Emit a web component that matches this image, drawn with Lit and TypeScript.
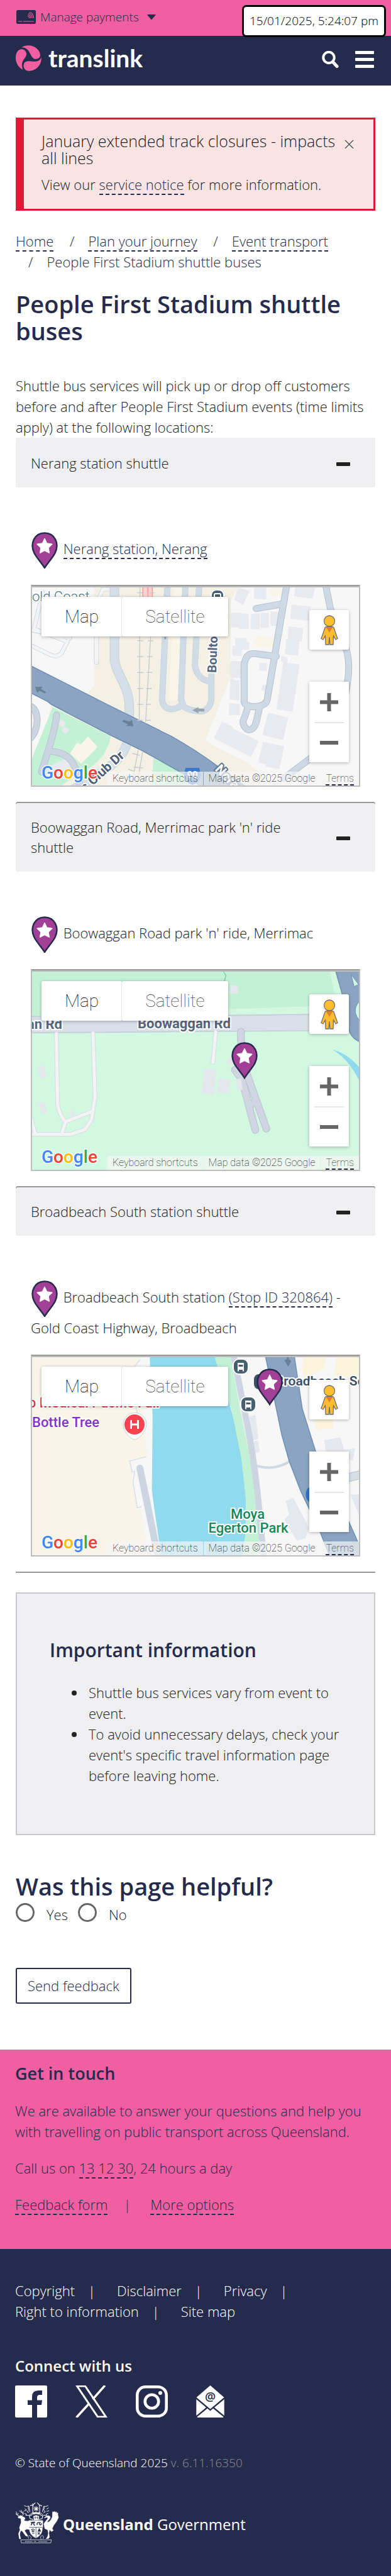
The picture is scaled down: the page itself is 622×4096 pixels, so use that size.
import { LitElement, html, svg, css, TemplateResult } from "lit";
import { customElement, property } from "lit/decorators.js";

/* ---------- shared drawings ---------- */

const pinShape = svg`
  <path d="M22 57C18 50 10 42 5.500 33.500C-2 18 6 1.500 22 1.500S46 18 38.500 33.500C34 42 26 50 22 57Z" fill="#a23f96" stroke="#252b4c" stroke-width="2.500"/>
  <path d="M22 10.500L25.600 18L33.800 19.200L27.900 25L29.300 33.200L22 29.400L14.700 33.200L16.100 25L10.200 19.200L18.400 18Z" fill="#fff" stroke="#fff" stroke-width="1.500" stroke-linejoin="round"/>`;

const road = (d: string, width: number, fill = "#cdd9e5", edge = "#b7c2d0") => svg`
  <path d=${d} fill="none" stroke=${edge} stroke-width=${width + 2} stroke-linecap="round" stroke-linejoin="round" vector-effect="non-scaling-stroke"/>
  <path d=${d} fill="none" stroke=${fill} stroke-width=${width} stroke-linecap="round" stroke-linejoin="round" vector-effect="non-scaling-stroke"/>`;

const busStop = (x: number, y: number) => svg`
  <g transform="translate(${x} ${y})">
    <rect x="-12" y="-12" width="24" height="24" rx="9" fill="#47606f" stroke="#fff" stroke-width="2"/>
    <path d="M-5 -6H5V5H-5Z" fill="#fff"/>
    <path d="M-3.500 -3H3.500V0H-3.500Z" fill="#47606f"/>
    <path d="M-4 5V7.500M4 5V7.500" stroke="#fff" stroke-width="2"/>
  </g>`;

const sleepers = [65, 430, 551, 673, 795, 916, 1037];

const nerangMap = svg`
  <rect width="522" height="317" fill="#f7f7f7"/>
  <g transform="matrix(.3365 0 0 .2085 -3.500 -5)">
    <path d="M303 25H985L950 130V700L832 1185L870 1230L1020 1350L1110 1470L1060 1543H20L100 920L275 825L303 770Z" fill="#f4f0e4"/>
    <path d="M680 25H722L702 870Q700 885 680 882H658Z" fill="#f9f5e8"/>
    <path d="M1135 25H1190V100L1135 95ZM1067 392L1160 408L1150 485L1062 472Z" fill="#f9f5e8"/>
    <path d="M108 938L383 1160C370 1270 330 1370 250 1430L140 1543H9V1330Z" fill="#c3f1d5"/>
    <path d="M585 1320L720 1440L760 1543H575Z" fill="#c3f1d5"/>
    <path d="M275 1162L321 1240L242 1370L190 1290L225 1205L240 1222Z" fill="#f9f5e8"/>
    <g fill="#e8eaf0">
      <path d="M985 25L1040 50L1008 157L965 118ZM1060 25H1118V115L1060 110ZM1255 25H1348L1338 110L1249 92ZM1237 155L1330 170L1322 280L1231 262Z"/>
      <path d="M950 217H1000V223H1035V340H988V330H948ZM1045 226L1087 222V343H1043ZM1092 216L1130 220V332H1090ZM1138 206L1182 212V322L1138 315Z"/>
      <path d="M970 410H1025V440H1038V500H1002V550L957 543V470H970ZM1222 320L1292 335L1285 437H1274L1268 545L1206 535L1212 420H1220ZM1085 600H1120V662L1084 656Z"/>
      <path d="M948 585H1000V713H948ZM947 720H965V732H992V885L944 880ZM942 907L993 915V998H941ZM1190 545L1218 560V600L1275 612L1242 973L1166 953L1198 590L1186 585Z"/>
      <path d="M908 1046L958 1085V1100L1082 1195L1045 1317L870 1175ZM1126 980L1221 1015L1197 1188L1100 1150ZM1101 1201L1202 1235L1180 1412L1116 1390V1370L1080 1358ZM1100 768H1116V815L1092 808Z"/>
      <path d="M150 1030L170 1055L155 1092L131 1060ZM165 1083L186 1108L170 1145L150 1115ZM80 1400L165 1330L220 1400V1480H80Z"/>
    </g>
    ${road("M60 60L20 340L165 430M9 350L190 410M9 470L100 540Q130 560 150 525L180 430M320 130L345 38H380", 5, "#f3f4f6", "#d3d8df")}
    ${road("M315 380V595", 6, "#f3f4f6", "#d3d8df")}
    ${road("M400 20V560C400 680 470 760 470 940V1080C470 1300 410 1380 210 1560", 13, "#d5dfe7", "#c5d0da")}
    ${road("M650 20L625 880C630 980 700 960 720 915C735 960 780 965 810 970C850 960 858 900 858 860V690M735 20L715 880L725 920M800 20L780 620C790 700 815 735 855 740", 8, "#cfdbe5", "#c8d5e1")}
    ${road("M1213 20L1122 880C1115 950 1010 950 1013 890V620C1020 520 1050 520 1090 535L1165 550M1195 150L1070 185M1030 930C1025 1000 1000 1040 1010 1070C1030 1140 1060 1110 1070 1050L1087 930", 9)}
    ${road("M1400 20L1420 180L1480 430C1520 560 1510 700 1490 850L1400 1240L1200 1480", 9)}
    ${road("M126 998C120 1120 80 1300 55 1430M100 1275C170 1280 205 1340 220 1430L240 1543M0 930C45 950 45 1100 5 1170", 9, "#cbd5e2")}
    <path d="M9 625L370 920L670 1160Q790 1270 890 1390L1020 1543H810L720 1440L610 1340L520 1260L380 1150L200 1000L100 915L85 895L9 833Z" fill="#8aa4c1" stroke="#6f8fb5" stroke-width="1.500" vector-effect="non-scaling-stroke"/>
    <path d="M533 20H580V110H533Z" fill="#ffd0d0"/>
    <path d="M534 20V110M558 20V110M579 20V110" stroke="#f79a9a" stroke-width="1.500" vector-effect="non-scaling-stroke"/>
    <path d="M521 20L517 1040M571 400L547 1050M512 1265L480 1543M533 1280L505 1543" stroke="#c6c9ce" stroke-width="1.300" vector-effect="non-scaling-stroke"/>
    ${sleepers.map((y) => svg`<path d="M508 ${y}H535M${566 - y / 50} ${y}h26" stroke="#c6c9ce" stroke-width="1.500" vector-effect="non-scaling-stroke"/>`)}
    <path d="M485 1290L520 1305M490 1395L535 1402M465 1410L490 1425" stroke="#c6c9ce" stroke-width="1.500" vector-effect="non-scaling-stroke"/>
    <path d="M25 783L60 782L53 800L76 820L73 835L45 812L35 828ZM489 1082L482 1032L473 1048L442 1034L438 1048L465 1068L455 1080Z" fill="#687f97"/>
    <path d="M768 960L797 936V950H825V970H797V985ZM636 400H644V420H636Z" fill="#9aa3ab"/>
  </g>
  <g class="label">
    <text x="0" y="22" font-size="22" fill="#4c7180">old Coast</text>
    <text transform="translate(293 136) rotate(-88)" font-size="20" font-weight="700" fill="#54657d">Boulton</text>
    <text transform="translate(148 269) rotate(-42)" text-anchor="end" font-size="21" font-weight="700" fill="#4c5d75">es Club Dr</text>
    <text transform="translate(290 290) rotate(46)" font-size="21" font-weight="700" fill="#fff" style="stroke:#5c7390">Nerang</text>
  </g>
  <rect x="285" y="4" width="20" height="34" rx="8" fill="#47606f" stroke="#fff" stroke-width="2"/>
  <rect x="290" y="10" width="10" height="12" rx="1.500" fill="none" stroke="#fff" stroke-width="2"/>
  <path d="M290 16H300" stroke="#fff" stroke-width="2"/>
  <path d="M244 287H266L268 298C267 308 261 312 255 314C249 312 243 308 242 298Z" fill="#3b78cc"/>
  <text x="255" y="303" text-anchor="middle" font-size="15" font-weight="700" fill="#fff">90</text>`;

const boowagganMap = svg`
  <rect width="522" height="317" fill="#d3f8e2"/>
  <g transform="matrix(.3967 0 0 .4036 -51 -279)">
    <path d="M128 685H1320L1350 810L1240 828L900 840L600 850L128 866Z" fill="#c3f1d5"/>
    <path d="M895 690L906 705L900 730" fill="none" stroke="#7fd0ad" stroke-width="1.500" vector-effect="non-scaling-stroke"/>
    <path d="M1332 998C1380 1010 1420 1040 1445 1075V1130C1420 1080 1390 1030 1332 998Z" fill="#8fdaee"/>
    <path d="M120 868L700 866L1445 857V922L700 928L120 932Z" fill="#d8dfe7" stroke="#c2cbd7" stroke-width="1.500" vector-effect="non-scaling-stroke"/>
    <path d="M1345 685H1445V968C1420 960 1400 940 1395 900L1375 790Z" fill="#8aa4c1" stroke="#6f8fb5" stroke-width="1.500" vector-effect="non-scaling-stroke"/>
    <path d="M1408 702L1438 742L1420 750ZM1445 805C1418 830 1418 860 1445 885Z" fill="#d3f8e2" stroke="#6f8fb5" stroke-width="1" vector-effect="non-scaling-stroke"/>
    ${road("M865 930L854 1048M226 936L231 1215Q240 1260 263 1282L248 1330M373 934L381 1185L367 1275L340 1313L283 1332H120M263 1282L367 1243M125 1270L140 1325", 5, "#f3f4f6", "#d9dce4")}
    ${road("M966 928V960L985 1080L1068 1310M942 1078L970 1115L1024 1315M1008 1214L1030 1203", 10, "#cfd5e1", "#b9c1d0")}
    <path d="M922 745H955V778L922 776ZM820 1070L868 1076L858 1175L808 1170ZM877 1110L925 1116L917 1172L870 1166ZM945 1115L966 1112L973 1155L955 1160ZM150 1067L175 1060L187 1105L163 1113ZM157 1210L178 1205L190 1247L167 1254ZM276 1244L290 1237L302 1255L285 1265ZM912 1030H935V1058H912Z" fill="#e4e8ec"/>
  </g>
  <g class="label" font-size="22" font-weight="700" fill="#54657d">
    <text x="48" y="91" text-anchor="end">Boowaggan Rd</text>
    <text x="168" y="90">Boowaggan Rd</text>
  </g>
  <g transform="translate(316 112)">${pinShape}</g>`;

const broadbeachMap = svg`
  <rect width="522" height="317" fill="#f7f7f7"/>
  <g transform="matrix(.3967 0 0 .4204 -51 -284)">
    <path d="M120 670H562L545 720L570 860L590 1055L520 1062L548 1245L565 1258L598 1435H120Z" fill="#f9f4e8"/>
    <path d="M562 685L540 710M545 868L575 960M586 1052L520 1068L530 1110L540 1108L534 1150L550 1245L567 1242" fill="none" stroke="#d8dee8" stroke-width="1.500" vector-effect="non-scaling-stroke"/>
    <path d="M600 670H862L935 900L972 1070L986 1210V1330L975 1435H648L622 1270L609 1180L612 900Z" fill="#90daee"/>
    <path d="M859 670H924L965 880L1008 1080L1035 1280L1040 1435H970L986 1330V1210L968 1060L930 880Z" fill="#c3f1d5"/>
    <path d="M1220 670H1310L1300 720L1225 755L1210 720ZM1350 670H1440V760L1340 745Z" fill="#fbf3dc"/>
    <path d="M1250 880H1335V945L1270 950Z" fill="#fbf3dc"/>
    <path d="M1000 900L1025 895L1036 985L1010 990ZM1015 995L1035 990L1042 1035L1022 1038ZM1300 990L1365 978L1380 1025L1424 1020L1415 1065L1310 1060ZM1145 1220L1175 1207L1240 1320L1225 1360L1190 1370L1140 1290L1160 1270ZM1405 1195H1445V1285Z" fill="#e6e8ef"/>
    ${road("M561 1095L635 1435", 9, "#cdd5e3", "#cdd5e3")}
    ${road("M935 660L985 900Q1020 1060 1038 1240L1058 1440", 8, "#cdd5e3", "#cdd5e3")}
    ${road("M1035 1088Q1100 1105 1162 1070", 2, "#cdd9e5", "#cdd9e5")}
    ${road("M1380 1135L1445 1120", 12, "#d5dfe7", "#b7c2d0")}
    <path d="M1064 670H1180L1212 870L1265 1030L1400 1300L1445 1395V1435H1325L1285 1340L1205 1180L1160 1070L1130 970Z" fill="#8aa4c1" stroke="#6f8fb5" stroke-width="1.500" vector-effect="non-scaling-stroke"/>
    <path d="M1140 687L1150 684V676H1158V684L1168 690L1156 711Z" fill="#687f97"/>
    <ellipse cx="1248" cy="1195" rx="22" ry="30" fill="#2f72cc"/>
  </g>
  <g class="label" font-weight="500">
    <text x="205" y="80" text-anchor="end" font-size="22" fill="#e0344c">p Medical Pacific Fair</text>
    <text x="0" y="111" font-size="22" fill="#8430ce">Bottle Tree</text>
    <text x="387" y="45" font-size="21" font-weight="600" fill="#3c4f66">Broadbeach South</text>
    <g font-size="22" text-anchor="middle" fill="#14875c"><text x="343" y="257">Moya</text><text x="344" y="279">Egerton Park</text></g>
  </g>
  <path d="M163 131C157 131 145 118 145 107A18.500 18.500 0 0 1 182 107C182 118 169 131 163 131Z" fill="#fff" stroke="#c9ccd3" stroke-width="1"/>
  <circle cx="163" cy="107" r="16" fill="#f9414f"/>
  <path d="M157.500 100V114M168.500 100V114M157.500 107H168.500" stroke="#fff" stroke-width="3"/>
  ${busStop(332, 15)}${busStop(344, 75)}
  <rect x="353" y="27" width="20" height="24" rx="8" fill="#3c4f66"/>
  <g transform="translate(356 18)">${pinShape}</g>`;

const crest = html`
  <svg class="crest" viewBox="24 44 398 368" aria-hidden="true">
    <g fill="#fff" stroke="#fff" stroke-linejoin="round">
      <path d="M50 172L75 160L98 172L112 180L116 196L104 198L112 210L140 212L150 208V262L158 290L130 285L110 298L138 340L136 352L118 345L90 305L78 298L68 322V340L76 372L62 374L54 325L68 290L62 272L78 225L76 190L52 184Z"/>
      <path d="M62 166L44 158L28 144M42 156L34 126M44 158L52 140M86 166L100 152L84 130L78 112M92 142L62 118M98 148L96 124" fill="none" stroke-width="5"/>
      <path d="M287 184C300 160 330 155 342 172C350 195 312 205 318 222C345 215 350 190 360 175L362 125L374 130L382 122L388 134L398 126L402 140L412 136L412 158L418 180L400 215L375 250L360 280L372 298L352 308L338 290L330 320L336 358L326 372H302L316 356L324 322L318 292L292 280L284 240C290 215 325 195 318 180C310 176 300 184 287 184Z" stroke-width="1"/>
      <path d="M150 207H275V268H270C275 320 245 350 213 364C178 350 148 320 156 268H150Z" stroke-width="3"/>
      <path d="M190 130L176 155L152 165L160 190L190 198M240 130L252 155L275 165L268 190L240 198M190 148C180 130 180 80 190 62L208 46M240 148C250 130 250 80 240 62L224 46M160 72L185 68M245 66L268 76M178 56L190 62" fill="none" stroke-width="6"/>
      <path d="M106 72L128 80L150 76L142 92L148 110L132 128L150 134M112 100L128 112L106 120M108 142L128 150L120 160L150 160L186 132M324 72L302 80L282 78L290 92L282 110L298 128L280 134M328 92L308 104M332 118L308 124M324 142L304 150L310 160L282 160L246 132M150 80L158 130M284 80L270 130" fill="none" stroke-width="5"/>
      <path d="M190 168L214 160L240 168L236 202H196Z" stroke-width="2"/>
      <path d="M186 138Q213 126 242 138L240 152Q213 142 190 152Z"/>
      <path d="M196 84L232 116M232 84L196 116M214 78V124M190 100H238" fill="none" stroke-width="6"/>
      <path d="M76 382H352L347 409H80ZM150 342Q178 350 165 378M150 342Q136 350 148 372M268 342Q246 350 260 378M268 342Q290 350 276 374" fill="none" stroke-width="4"/>
    </g>
    <g fill="none" stroke="#252b4c">
      <path d="M213 268V364M156 268H270M207 170V195M199 180H215M226 170V195M218 180H234" stroke-width="4"/>
      <path d="M168 250Q185 215 200 222Q182 240 204 252M166 228L184 222M224 248Q215 218 255 226Q235 232 250 246Q260 250 264 232" stroke-width="8"/>
      <path d="M172 284L180 300M186 278V302M201 284L194 300M174 308H200M178 322H198M228 314L248 334M248 314L228 334" stroke-width="6"/>
      <path d="M228 306L243 276L258 306Z" fill="#252b4c" stroke-width="2"/>
      <path d="M114 396H180M197 396H216M236 396H316" stroke="#fff" stroke-width="7" stroke-dasharray="5 5"/>
    </g>
  </svg>`;

/* ---------- embedded map ---------- */

@customElement("stop-map")
class StopMap extends LitElement {
  @property({ attribute: false }) drawing: TemplateResult | null = null;

  static styles = css`
    :host { display: block; font-family: Roboto, sans-serif; }
    .frame { position: relative; box-sizing: border-box; height: 321px; border: 2px solid #bdbdbd; border-top: 2px solid #999; overflow: hidden; }
    .drawing { display: block; box-sizing: border-box; width: 100%; height: 100%; border-top: 2px solid #bdbdbd; }
    .label text { paint-order: stroke; stroke: #fff; stroke-width: 4px; stroke-linejoin: round; }
    button { margin: 0; padding: 0; border: 0; background: #fff; font: inherit; cursor: pointer; }
    .types { position: absolute; left: 15px; top: 17px; display: flex; border-radius: 3px; box-shadow: 0 1px 5px rgba(0, 0, 0, .28); }
    .types button { height: 63px; padding: 0 37px; font-size: 28px; font-weight: 100; color: #000; border-radius: 3px; }
    .types button + button { color: #444; box-shadow: -1px 0 2px rgba(0, 0, 0, .12); }
    .person, .zoom { position: absolute; right: 16px; width: 63px; box-shadow: 0 1px 5px rgba(0, 0, 0, .28); }
    .person { top: 38px; height: 63px; border-radius: 3px; display: grid; place-items: center; }
    .zoom { top: 152px; background: #fff; }
    .zoom button { display: grid; place-items: center; width: 63px; height: 64px; }
    .zoom button + button { position: relative; }
    .zoom button + button::before { content: ""; position: absolute; top: 0; left: 8px; right: 8px; height: 2px; background: #e6e6e6; }
    .google { position: absolute; left: 15px; bottom: 4px; font-size: 28px; font-weight: 500; line-height: 33px; paint-order: stroke; -webkit-text-stroke: 3px rgba(255, 255, 255, .8); text-decoration: none; }
    .blue { color: #4285f4; } .red { color: #ea4335; } .gold { color: #fbbc05; } .green { color: #34a853; }
    .credits { position: absolute; right: 0; bottom: 0; display: flex; gap: 1px; font-size: 16px; font-weight: 100; line-height: 22px; color: #000; }
    .credits > * { padding: 0 8px; background: rgba(245, 245, 245, .7); }
    .credits button { font-size: 16px; font-weight: 100; color: #000; }
    .credits a { color: #222; text-decoration: none; height: 20px; border-bottom: 2px dashed #252b4c; display: block; }
  `;

  render() {
    return html`
      <div class="frame">
        <svg class="drawing" viewBox="0 0 520 315" preserveAspectRatio="xMidYMid slice" role="img" aria-label="Map">${this.drawing}</svg>
        <a class="google" href="#"><span class="blue">G</span><span class="red">o</span><span class="gold">o</span><span class="blue">g</span><span class="green">l</span><span class="red">e</span></a>
        <div class="types"><button>Map</button><button>Satellite</button></div>
        <button class="person" aria-label="Street View">
          <svg width="28" height="48" viewBox="0 0 28 48">
            <g fill="#fdbd2f" stroke="#707070" stroke-width="1.300">
              <path d="M6.500 21.500Q7 18.500 10 18.500H18Q21 18.500 21.500 21.500L27 37.500L24 39L20.500 33L20 47H15L14 35L13 47H8L7.500 33L4 39L1 37.500Z"/>
              <circle cx="14" cy="9.500" r="8.500"/>
            </g>
            <path d="M8.500 19H19.500L14 28Z" fill="#e0812c"/>
          </svg>
        </button>
        <div class="zoom">
          <button aria-label="Zoom in"><svg width="29" height="29"><path d="M0 14.500H29M14.500 0V29" stroke="#666" stroke-width="6"/></svg></button>
          <button aria-label="Zoom out"><svg width="29" height="29"><path d="M0 15H29" stroke="#666" stroke-width="6"/></svg></button>
        </div>
        <div class="credits"><button>Keyboard shortcuts</button><span>Map data ©2025 Google</span><span><a href="#">Terms</a></span></div>
      </div>`;
  }
}

/* ---------- page ---------- */

@customElement("app-root")
class AppRoot extends LitElement {
  static styles = css`
    :host { display: block; position: relative; font: 300 22px/33px "Open Sans", sans-serif; color: #222; background: #fff; }
    h1, h2, h3, p, ul, ol { margin: 0; padding: 0; }
    ul, ol { list-style: none; }
    h1, h2, h3 { font-weight: 600; color: #252b4c; }
    h1, h2 { font-size: 38px; line-height: 43px; }
    button { margin: 0; padding: 0; border: 0; background: none; font: inherit; color: inherit; text-align: left; cursor: pointer; }
    a { color: #252b4c; text-decoration: none; border-bottom: 2px dashed #252b4c; }
    svg { flex: none; }

    .clock { position: absolute; top: 8px; right: 8px; box-sizing: border-box; height: 51px; padding: 0 9px; border: 3px solid #000; border-radius: 7px; background: #fff; color: #000; font-size: 19px; line-height: 45px; }
    .payments { height: 57px; padding-left: 26px; background: #f05fa1; }
    .payments button { display: flex; align-items: center; height: 54px; color: #252b4c; font-size: 19px; }
    .payments .card { margin-right: 7px; }
    .payments .arrow { margin-left: 13px; }
    .brand { display: flex; align-items: flex-start; padding: 15px 27px 19px 25px; background: #252b4c; }
    .brand a { display: flex; border: 0; color: #fff; font: 700 39px/41px Lato, sans-serif; gap: 11px; margin-right: auto; }
    .brand button { height: 45px; display: flex; align-items: center; margin-left: 26px; }

    main { padding: 51px 25px 73px; }
    .alert { display: flex; gap: 4px; padding: 21px 31px 22px 28px; border: 3px solid #e31836; border-left-width: 13px; background: #f9e4e3; align-items: flex-start; color: #1c1c1c; }
    .alert div { flex: 1; }
    .alert h2 { font-size: 25px; line-height: 27px; font-weight: 300; color: inherit; margin-bottom: 12px; }
    .alert button { display: flex; margin-top: 11px; }

    .crumbs { margin: 32px 0 29px; color: #252b4c; }
    .crumbs li { display: inline-block; }
    .crumbs a { display: inline; }
    .crumbs li + li::before { content: "/"; margin: 0 22px 0 20px; }
    .intro { margin-top: 49px; }

    .head { display: flex; align-items: center; width: 100%; padding: 24px 40px 23px 24px; border-radius: 3px; background: #efeff1; line-height: 32px; box-sizing: border-box; }
    .head span { flex: 1; padding-right: 60px; }
    .head i { width: 22px; height: 6px; margin-top: 3px; border-radius: 1px; background: #222; }
    .item + .item .head { box-shadow: inset 0 2px #999; }
    .body { padding: 71px 24px 24px; }
    .place { line-height: 34px; margin-bottom: 26px; }
    .place svg { vertical-align: middle; margin-right: 2px; }
    .accordion { border-bottom: 2px solid #999; }

    .info { margin: 31px 0 60px; padding: 70px 50px 76px 52px; border: 2px solid #c8c8d2; background: #efeff1; }
    .info h3 { font-size: 30px; line-height: 40px; margin-bottom: 31px; }
    .info ul { padding-left: 35px; }
    .info li { display: flex; gap: 19px; }
    .info li::before { content: ""; flex: none; width: 8px; height: 8px; margin-top: 13px; border-radius: 50%; background: #222; }

    .answers { display: flex; gap: 16px; padding-top: 4px; margin-bottom: 67px; }
    .answers label { display: flex; gap: 19px; line-height: 36px; padding-top: 1px; align-items: flex-start; }
    .answers input { appearance: none; box-sizing: border-box; width: 30px; height: 30px; margin: 0; border: 3px solid #666; border-radius: 50%; background: #fff; }
    .send { display: block; padding: 0 17px; border: 2px solid #252b4c; border-radius: 3px; color: #252b4c; line-height: 53px; }

    .touch { padding: 20px 24px 54px; background: #f05fa1; color: #252b4c; }
    .touch h3 { font-size: 27px; line-height: 36px; }
    .touch p { margin-top: 25px; }
    .bar { margin: 0 31px 0 25px; }

    footer { padding: 50px 24px 56px; background: #252b4c; color: #fff; }
    footer a { border: 0; color: #fff; }
    .links { display: flex; flex-wrap: wrap; width: 90%; }
    .links li:not(:last-child)::after { content: "|"; margin: 0 34px 0 21px; }
    footer h3 { margin: 54px 0 15px; font-size: 24px; line-height: 32px; color: #fff; }
    .social { display: flex; gap: 45px; height: 51px; }
    .social a { display: flex; }
    .legal { margin: 58px 0 48px; font-size: 19px; line-height: 29px; }
    .legal span { color: #8d8d92; }
    .gov { display: flex; align-items: center; gap: 6px; height: 64px; font-size: 24px; line-height: 34px; }
    .gov p { padding-top: 5px; font-weight: 400; }
    .crest { width: 70px; height: 65px; }
  `;

  private pin() {
    return html`<svg width="44" height="58" viewBox="0 0 44 58" aria-hidden="true">${pinShape}</svg>`;
  }

  private item(title: string, place: TemplateResult, drawing: TemplateResult) {
    return html`
      <section class="item">
        <button class="head" aria-expanded="true"><span>${title}</span><i></i></button>
        <div class="body">
          <p class="place">${this.pin()} ${place}</p>
          <stop-map .drawing=${drawing}></stop-map>
        </div>
      </section>`;
  }

  render() {
    return html`
      <div class="payments">
        <button>
          <svg class="card" width="31" height="22" viewBox="0 0 31 22">
            <rect width="31" height="22" rx="2.500" fill="#252b4c"/>
            <path d="M3.500 18H9M11.500 18H27.500M18.500 9.500Q20.500 9.500 20.500 12.500M19 7.500Q22.500 7.800 22.700 12.500M19.800 5.500Q24.800 6 25 12.500M21 3.500Q27 4.500 27.300 12.500" fill="none" stroke="#f05fa1" stroke-width="1.200" stroke-linecap="round"/>
          </svg>
          Manage payments
          <svg class="arrow" width="14" height="9"><path d="M1 0H13Q14 0 13.500 1L7.500 8Q7 8.500 6.500 8L.5 1Q0 0 1 0Z" fill="#252b4c"/></svg>
        </button>
      </div>
      <header class="brand">
        <a href="#">
          <svg width="41" height="41" viewBox="24 320 233 233" aria-hidden="true">
            <g fill="#f05fa1">
              <path d="M78 338C110 315 175 312 215 350C240 372 250 400 244 420C236 440 215 446 196 443C150 430 160 340 78 338Z"/>
              <path d="M88 540C45 520 22 475 24 425C28 385 45 357 78 356C105 356 122 378 121 404C112 445 62 460 88 540Z"/>
              <path d="M255 430C260 490 215 550 145 552C118 552 98 535 95 507C95 480 112 464 138 464C180 464 235 482 255 430Z"/>
            </g>
          </svg>
          translink
        </a>
        <button aria-label="Search"><svg width="27" height="27" viewBox="0 0 27 27"><circle cx="11" cy="10.500" r="8.700" fill="none" stroke="#fff" stroke-width="4"/><path d="M17.500 17.500L24 24.500" stroke="#fff" stroke-width="5" stroke-linecap="round"/></svg></button>
        <button aria-label="Menu"><svg width="30" height="27" viewBox="0 0 30 27" fill="#fff"><rect width="30" height="5" rx="1"/><rect y="11" width="30" height="5" rx="1"/><rect y="22" width="30" height="5" rx="1"/></svg></button>
      </header>
      <time class="clock">15/01/2025, 5:24:07 pm</time>

      <main>
        <section class="alert">
          <div>
            <h2>January extended track closures - impacts all lines</h2>
            <p>View our <a href="#">service notice</a> for more information.</p>
          </div>
          <button aria-label="Close"><svg width="15" height="15"><path d="M1 3L14 15M14 3L1 15" stroke="#fff" stroke-width="1.500"/><path d="M1 1L14 14M14 1L1 14" stroke="#555" stroke-width="1.500"/></svg></button>
        </section>

        <nav aria-label="Breadcrumb">
          <ol class="crumbs">
            <li><a href="#">Home</a></li>
            <li><a href="#">Plan your journey</a></li>
            <li><a href="#">Event transport</a></li>
            <li>People First Stadium shuttle buses</li>
          </ol>
        </nav>

        <h1>People First Stadium shuttle buses</h1>
        <p class="intro">Shuttle bus services will pick up or drop off customers before and after People First Stadium events (time limits apply) at the following locations:</p>

        <div class="accordion">
          ${this.item("Nerang station shuttle", html`<a href="#">Nerang station, Nerang</a>`, nerangMap)}
          ${this.item("Boowaggan Road, Merrimac park 'n' ride shuttle", html`Boowaggan Road park 'n' ride, Merrimac`, boowagganMap)}
          ${this.item("Broadbeach South station shuttle", html`Broadbeach South station <a href="#">(Stop ID 320864)</a> - Gold Coast Highway, Broadbeach`, broadbeachMap)}
        </div>

        <section class="info">
          <h3>Important information</h3>
          <ul>
            <li><span>Shuttle bus services vary from event to event.</span></li>
            <li><span>To avoid unnecessary delays, check your event's specific travel information page before leaving home.</span></li>
          </ul>
        </section>

        <form>
          <h2 id="helpful">Was this page helpful?</h2>
          <div class="answers" role="radiogroup" aria-labelledby="helpful">
            <label><input type="radio" name="helpful" value="yes">Yes</label>
            <label><input type="radio" name="helpful" value="no">No</label>
          </div>
          <button class="send" type="button">Send feedback</button>
        </form>
      </main>

      <section class="touch">
        <h3>Get in touch</h3>
        <p>We are available to answer your questions and help you with travelling on public transport across Queensland.</p>
        <p>Call us on <a href="#">13 12 30</a>, 24 hours a day</p>
        <p><a href="#">Feedback form</a><span class="bar">|</span><a href="#">More options</a></p>
      </section>

      <footer>
        <ul class="links">
          <li><a href="#">Copyright</a></li>
          <li><a href="#">Disclaimer</a></li>
          <li><a href="#">Privacy</a></li>
          <li><a href="#">Right to information</a></li>
          <li><a href="#">Site map</a></li>
        </ul>
        <h3>Connect with us</h3>
        <div class="social">
          <a href="#" aria-label="Facebook"><svg width="51" height="51" viewBox="0 0 51 51"><path d="M2 0H49Q51 0 51 2V49Q51 51 49 51H35V31H42L43 23.500H35V19Q35 15 39 15H43V8H37Q27 8 27 18V23.500H20V31H27V51H2Q0 51 0 49V2Q0 0 2 0Z" fill="#fff"/></svg></a>
          <a href="#" aria-label="X"><svg width="51" height="51" viewBox="0 0 51 51"><path d="M2.500 1H15.500L48.500 50H35.500Z" fill="none" stroke="#fff" stroke-width="3"/><path d="M47 0L27.500 22M22 28.500L1.500 51" stroke="#fff" stroke-width="3.500"/></svg></a>
          <a href="#" aria-label="Instagram"><svg width="51" height="51" viewBox="0 0 51 51" fill="none" stroke="#fff" stroke-width="4.600"><rect x="2.300" y="2.300" width="46.400" height="46.400" rx="13"/><circle cx="25.500" cy="25.500" r="10.800"/><circle cx="39" cy="12" r="3" fill="#fff" stroke="none"/></svg></a>
          <a href="#" aria-label="Email"><svg width="45" height="51" viewBox="0 0 45 51"><path d="M22.500 0L44.500 19L22.500 37.500L.5 19Z" fill="#fff"/><path d="M.3 22L16 35L.3 48ZM44.700 22L29 35L44.700 48ZM18 36.500L22.500 40.500L27 36.500L43.500 50Q43.500 51 42 51H3Q1.500 51 1.500 50Z" fill="#fff"/><text x="22.500" y="25" text-anchor="middle" font-family="Open Sans, sans-serif" font-size="19" font-weight="600" fill="#252b4c">@</text></svg></a>
        </div>
        <p class="legal">© State of Queensland 2025 <span>v. 6.11.16350</span></p>
        <div class="gov">${crest}<p><b>Queensland</b> Government</p></div>
      </footer>`;
  }
}
